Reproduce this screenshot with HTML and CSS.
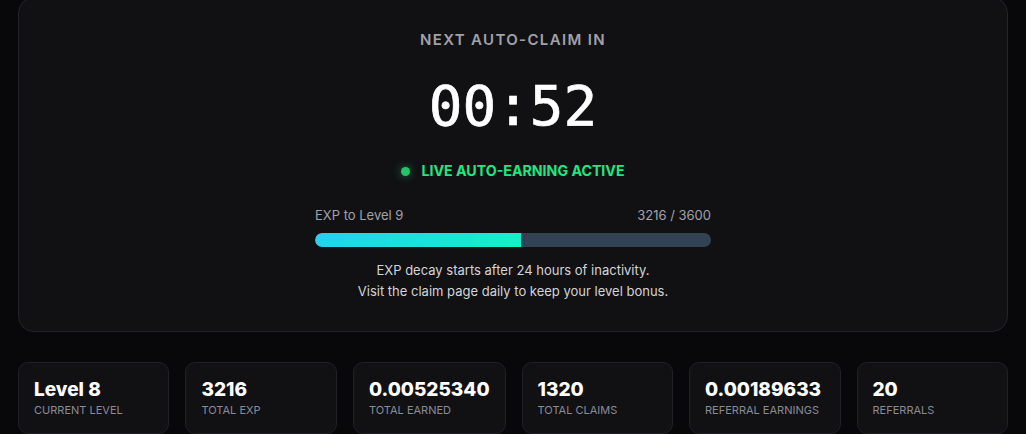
FILE: index.html
```html
<!DOCTYPE html>
<html lang="en">
<head>
  <meta charset="UTF-8" />
  <meta name="viewport" content="width=device-width, initial-scale=1.0" />
  <title>Auto-Claim Dashboard</title>
  <link rel="stylesheet" href="styles.css">
</head>
<body>
  <div class="page">
    <div class="claim-card">
      <div class="claim-title">Next Auto-Claim In</div>
      <div class="timer">00:52</div>
      <div class="live">
        <span class="live-dot"></span>
        <span>Live Auto-Earning Active</span>
      </div>

      <div class="progress">
        <div class="progress-labels">
          <span>EXP to Level 9</span>
          <span>3216 / 3600</span>
        </div>
        <div class="bar">
          <div class="bar-fill" style="width: 52%;"></div>
        </div>
      </div>

      <p class="note">
        EXP decay starts after 24 hours of inactivity.<br>
        Visit the claim page daily to keep your level bonus.
      </p>
    </div>

    <div class="stats">
      <div class="stat">
        <div class="stat-value">Level 8</div>
        <div class="stat-label">Current Level</div>
      </div>
      <div class="stat">
        <div class="stat-value">3216</div>
        <div class="stat-label">Total EXP</div>
      </div>
      <div class="stat">
        <div class="stat-value">0.00525340</div>
        <div class="stat-label">Total Earned</div>
      </div>
      <div class="stat">
        <div class="stat-value">1320</div>
        <div class="stat-label">Total Claims</div>
      </div>
      <div class="stat">
        <div class="stat-value">0.00189633</div>
        <div class="stat-label">Referral Earnings</div>
      </div>
      <div class="stat">
        <div class="stat-value">20</div>
        <div class="stat-label">Referrals</div>
      </div>
    </div>
  </div>
</body>
</html>
```

FILE: styles.css
```css
* {
  box-sizing: border-box;
}
body {
  font-family: Inter, "Noto Sans", sans-serif;
  background: #08080b;
  color: #fff;
  margin: 0;
  overflow: hidden;
}
.page {
  padding: 0 18px;
  margin-top: -3px;
}
.claim-card {
  background: #111114;
  border: 1px solid #24242a;
  border-radius: 16px;
  padding: 32px 24px 29px;
  text-align: center;
}
.claim-title {
  font-size: 15px;
  line-height: 20px;
  font-weight: 600;
  letter-spacing: 0.09em;
  text-transform: uppercase;
  color: #a1a1aa;
}
.timer {
  font-family: "DejaVu Sans Mono", "Liberation Mono", monospace;
  font-size: 56px;
  line-height: 70px;
  font-weight: 400;
  -webkit-text-stroke: 0.7px #fff;
  margin-top: 21px;
}
.live {
  display: flex;
  align-items: center;
  justify-content: center;
  gap: 11px;
  margin-top: 20px;
  font-size: 14.2px;
  line-height: 20px;
  font-weight: 700;
  color: #22e681;
  text-transform: uppercase;
}
.live-dot {
  width: 9px;
  height: 9px;
  border-radius: 50%;
  background: #22c56a;
  box-shadow: 0 0 8px rgba(34, 197, 106, 0.6);
}
.progress {
  width: 396px;
  margin: 25px auto 0;
}
.progress-labels {
  display: flex;
  justify-content: space-between;
  font-size: 13px;
  line-height: 18px;
  color: #a1a1aa;
}
.bar {
  height: 14px;
  margin-top: 9px;
  border-radius: 7px;
  background: #334155;
  overflow: hidden;
}
.bar-fill {
  height: 100%;
  border-radius: 7px 0 0 7px;
  background: linear-gradient(90deg, #22d3ee, #14f0c8);
}
.note {
  margin: 13px 0 0;
  font-size: 13px;
  line-height: 21px;
  color: #d4d4d8;
}
.stats {
  display: grid;
  grid-template-columns: repeat(6, 1fr);
  gap: 16px;
  margin-top: 30px;
}
.stat {
  background: #111114;
  border: 1px solid #202026;
  border-radius: 10px;
  padding: 15px 15px 16px;
  text-align: left;
}
.stat-value {
  font-size: 19px;
  line-height: 24px;
  font-weight: 800;
}
.stat-label {
  font-size: 11px;
  line-height: 14px;
  color: #8b8b96;
  text-transform: uppercase;
  margin-top: 1px;
}
```
